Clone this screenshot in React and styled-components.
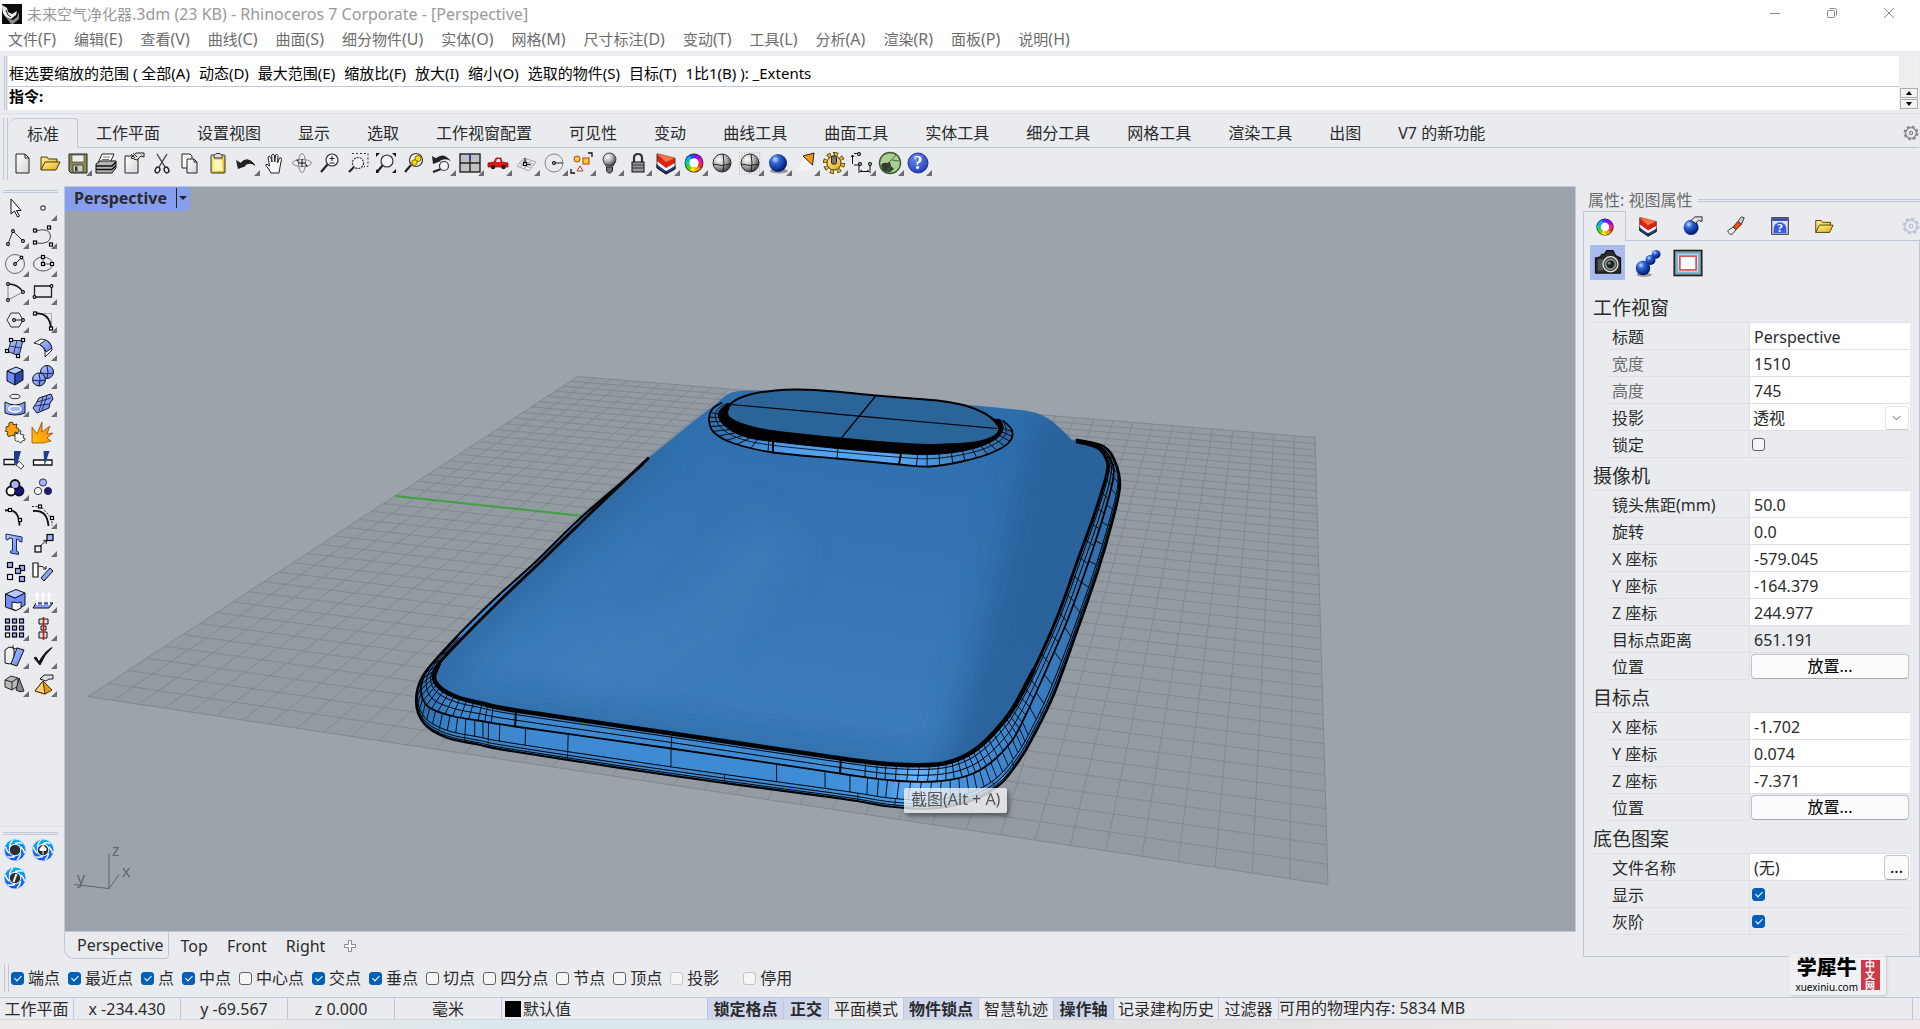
import React from 'react';
import styled, { createGlobalStyle, css } from 'styled-components';

const palette = {
  window: '#eaebef',
  line: '#c0c6dc',
  soft: '#dde0e8',
  text: '#2b2b2b',
  muted: '#6d6d6d',
  accent: '#005fb8',
  select: '#a9baec',
  viewport: '#9da3ab',
};

const GlobalStyle = createGlobalStyle`
  * {
    box-sizing: border-box;
  }
  body {
    margin: 0;
    background: ${palette.window};
    color: ${palette.text};
    font-family: 'Noto Sans', 'Noto Sans CJK SC', sans-serif;
    font-size: 16px;
    line-height: 20px;
  }
  button, input, select {
    font: inherit;
    color: inherit;
    margin: 0;
  }
  button {
    padding: 0;
    border: none;
    background: none;
  }
`;

/* ---------- layout ---------- */

const Window = styled.div`
  display: flex;
  flex-direction: column;
  min-height: 100vh;
`;

const TitleBar = styled.header`
  display: flex;
  align-items: center;
  height: 28px;
  padding: 0 3px 0 2px;
  background: #fff;
  color: #999;
`;

const Title = styled.h1`
  flex: 1;
  margin: 0 0 0 5px;
  font-size: 15px;
  font-weight: 400;
  span {
    font-size: 16px;
  }
`;

const WindowButton = styled.button`
  width: 57px;
  height: 26px;
  margin-bottom: 2px;
  svg {
    display: block;
    margin: 0 auto;
  }
`;

const MenuBar = styled.nav`
  display: flex;
  gap: 18px;
  height: 23px;
  padding: 0 8px 2px;
  background: #fff;
`;

const MenuItem = styled.button`
  font-size: 15px;
  line-height: 20px;
  color: #6d6d6d;
  white-space: nowrap;
  span {
    font-size: 16px;
  }
`;

const grip = css`
  border-left: 1px solid ${palette.line};
  &::before {
    content: '';
    width: 1px;
    margin-left: 1px;
    background: ${palette.line};
  }
`;

const CommandArea = styled.section`
  display: flex;
  margin: 5px 1px 3px 4px;
  height: 54px;
  ${grip}
`;

const CommandLines = styled.div`
  flex: 1;
  display: flex;
  flex-direction: column;
  margin-left: 1px;
  background: #fff;
  font-size: 15px;
  color: #000;
`;

const History = styled.div`
  display: flex;
  gap: 9px;
  height: 31px;
  padding: 7px 1px 0;
  border-bottom: 1px solid ${palette.line};
  white-space: nowrap;
`;

const Prompt = styled.label`
  display: flex;
  height: 20px;
  padding-left: 1px;
  font-weight: 700;
  line-height: 19px;
  input {
    flex: 1;
    border: none;
    outline: none;
    background: none;
    font-weight: 400;
  }
`;

const CommandScroll = styled.div`
  width: 20px;
  display: flex;
  flex-direction: column;
  gap: 1px;
  padding: 32px 1px 0;
  background: #eee;
`;

const ScrollButton = styled.button`
  height: 10px;
  border: 1px solid #adadad;
  background: #f2f2f2;
  svg {
    display: block;
    margin: 0 auto;
  }
`;

const ToolArea = styled.section`
  display: flex;
  height: 73px;
  border-top: 1px solid ${palette.soft};
  padding: 4px 1px 0 3px;
  &::before {
    content: '';
    width: 3px;
    height: 62px;
    border: solid ${palette.line};
    border-width: 0 1px;
  }
`;

const ToolMain = styled.div`
  flex: 1;
  min-width: 0;
`;

const TabStrip = styled.div`
  display: flex;
  height: 30px;
  padding-left: 1px;
`;

const ToolTab = styled.button`
  height: 30px;
  padding: ${({ $active }) => ($active ? '1px 18px 0' : '1px 19px 0 18px')};
  border-bottom: 1px solid ${({ $active }) => ($active ? 'transparent' : palette.line)};
  white-space: nowrap;
  ${({ $active }) =>
    $active &&
    css`
      border-top: 1px solid ${palette.line};
      border-right: 1px solid ${palette.line};
      border-radius: 8px 4px 0 0;
    `}
`;

const StripFill = styled.div`
  flex: 1;
  display: flex;
  justify-content: flex-end;
  align-items: center;
  border-bottom: 1px solid ${palette.line};
`;

const IconRow = styled.div`
  display: flex;
  padding-top: 1px;
`;

const ToolButton = styled.button`
  position: relative;
  width: 28px;
  height: 28px;
  svg {
    display: block;
    margin: 0 auto;
  }
  ${({ $more }) =>
    $more &&
    css`
      &::after {
        content: '';
        position: absolute;
        right: 0;
        bottom: 1px;
        border-left: 6px solid transparent;
        border-bottom: 6px solid #6c6d70;
      }
    `}
`;

const Workspace = styled.main`
  flex: 1;
  display: flex;
`;

const SideBar = styled.aside`
  width: 64px;
  display: flex;
  flex-direction: column;
  padding-top: 4px;
`;

const Rule = styled.div`
  height: 3px;
  margin: 0 6px 0 3px;
  border: solid ${palette.line};
  border-width: 1px 0;
`;

const SideGrid = styled.div`
  display: grid;
  grid-template-columns: 28px 28px;
  padding: 1px 0 0 1px;
`;

const PluginTools = styled.div`
  margin-top: auto;
  height: 134px;
  border-top: 1px solid ${palette.soft};
  padding-top: 5px;
`;

const Center = styled.div`
  flex: 1;
  min-width: 0;
  display: flex;
  flex-direction: column;
`;

const Viewport = styled.section`
  position: relative;
  flex: 1;
  min-height: 740px;
  overflow: hidden;
  border: 1px solid ${palette.line};
  background: ${palette.viewport};
  > svg {
    position: absolute;
    inset: 0;
    width: 100%;
    height: 100%;
  }
`;

const ViewTitle = styled.button`
  position: absolute;
  left: 0;
  top: 0;
  display: flex;
  align-items: center;
  height: 24px;
  padding: 0 0 2px 9px;
  border-radius: 0 0 5px 0;
  background: #879eed;
  font-weight: 700;
  span {
    padding-right: 9px;
  }
  i {
    width: 14px;
    height: 20px;
    border-left: 1px solid #222;
  }
  i::after {
    content: '';
    display: block;
    margin: 8px 0 0 2px;
    width: 0;
    border: 4px solid transparent;
    border-top-color: #222;
  }
`;

const Tooltip = styled.div`
  position: absolute;
  left: 839px;
  top: 601px;
  height: 25px;
  padding: 1px 7px;
  border-radius: 2px;
  background: rgba(242, 243, 245, 0.78);
  box-shadow: 2px 3px 4px rgba(0, 0, 0, 0.4);
  color: #555;
  white-space: nowrap;
`;

const ViewTabs = styled.div`
  display: flex;
  align-items: center;
  height: 28px;
  gap: 19px;
`;

const ViewTab = styled.button`
  height: 27px;
  ${({ $active }) =>
    $active &&
    css`
      align-self: flex-start;
      padding: 0 4px 0 12px;
      border: solid ${palette.line};
      border-width: 0 1px 1px;
      border-radius: 0 0 4px 10px;
      margin-right: -7px;
    `}
`;

/* ---------- properties panel ---------- */

const Panel = styled.aside`
  width: 344px;
  display: flex;
  flex-direction: column;
  padding-left: 7px;
`;

const PanelTitle = styled.div`
  display: flex;
  align-items: center;
  gap: 6px;
  height: 25px;
  padding: 3px 0 0 5px;
  color: ${palette.muted};
  ${Rule} {
    flex: 1;
    margin: 0;
  }
`;

const PanelTabs = styled.div`
  display: flex;
  height: 30px;
`;

const PanelTab = styled.button`
  width: ${({ $active }) => ($active ? '43px' : '44px')};
  border: solid ${palette.line};
  border-width: ${({ $active }) => ($active ? '1px 1px 0' : '0 0 1px')};
  svg {
    display: block;
    margin: 0 auto;
  }
`;

const PanelBody = styled.div`
  height: 716px;
  padding: 4px 9px 0;
  border: solid ${palette.line};
  border-width: 0 1px 1px;
`;

const PageButtons = styled.div`
  display: flex;
  gap: 5px;
  margin-left: -3px;
  height: 45px;
`;

const PageButton = styled.button`
  width: 35px;
  height: 35px;
  background: ${({ $active }) => ($active ? palette.select : 'none')};
  svg {
    display: block;
    margin: 0 auto;
  }
`;

const SectionTitle = styled.h2`
  margin: 0;
  height: 33px;
  padding-top: 4px;
  border-bottom: 1px solid ${palette.soft};
  font-size: 19px;
  line-height: 28px;
  font-weight: 400;
`;

const Property = styled.div`
  display: grid;
  grid-template-columns: 141px 1fr;
  height: 27px;
  margin-left: 15px;
  > label {
    padding: 4px 0 0 4px;
    border-bottom: 1px solid ${palette.soft};
    color: ${({ $muted }) => ($muted ? palette.muted : palette.text)};
  }
`;

const PropertyValue = styled.div`
  display: flex;
  align-items: center;
  min-width: 0;
  border: solid ${palette.soft};
  border-width: 0 0 1px 1px;
  background: ${({ $plain }) => ($plain ? 'none' : '#fff')};
  ${({ $action }) => $action && 'border-bottom-color: transparent;'}
`;

const TextField = styled.input`
  width: 100%;
  min-width: 0;
  padding: 1px 4px 0;
  border: none;
  outline: none;
  background: none;
`;

const Picker = styled.div`
  position: relative;
  display: flex;
  width: 100%;
  select {
    width: 100%;
    padding: 1px 3px 0;
    border: none;
    appearance: none;
    background: none;
  }
  svg {
    position: absolute;
    right: 1px;
    top: -1px;
    border: 1px solid #e6e6e6;
    border-bottom-color: #ccc;
    border-radius: 3px;
    pointer-events: none;
  }
`;

const PushButton = styled.button`
  flex: ${({ $small }) => ($small ? '0 0 25px' : '1')};
  height: 25px;
  margin: 0 1px;
  border: 1px solid #c4c4c8;
  border-bottom-color: #a8a8ac;
  border-radius: 4px;
  background: #fbfbfb;
  color: #000;
`;

const Tick = styled.input.attrs({ type: 'checkbox' })`
  appearance: none;
  flex: none;
  width: 13px;
  height: 13px;
  border: 1px solid ${({ disabled }) => (disabled ? '#c4c4c4' : '#5f6063')};
  border-radius: 3px;
  background: #f5f5f5;
  &:checked {
    border-color: ${palette.accent};
    background: ${palette.accent};
  }
  &:checked::after {
    content: '';
    display: block;
    width: 3px;
    height: 6px;
    margin: 1px 0 0 4px;
    border: solid #fff;
    border-width: 0 1px 1px 0;
    transform: rotate(45deg);
  }
  ${PropertyValue} & {
    margin-left: 2px;
  }
`;

/* ---------- bottom bars ---------- */

const SnapBar = styled.footer`
  position: relative;
  display: flex;
  height: 38px;
  padding: 4px 0 5px 4px;
  border-bottom: 1px solid ${palette.line};
  &::before {
    content: '';
    width: 3px;
    border: solid ${palette.line};
    border-width: 0 1px;
  }
`;

const SnapList = styled.div`
  display: flex;
  gap: 8px;
  align-items: center;
  padding-left: 2px;
`;

const Snap = styled.label`
  display: flex;
  align-items: center;
  gap: 4px;
  margin-left: ${({ $apart }) => ($apart ? '16px' : '0')};
  white-space: nowrap;
`;

const StatusBar = styled.footer`
  display: flex;
  height: 22px;
  border-bottom: 1px solid #d3d6dc;
`;

const StatusCell = styled.button`
  flex: none;
  display: flex;
  align-items: center;
  justify-content: ${({ $start }) => ($start ? 'flex-start' : 'center')};
  gap: 2px;
  width: ${({ $w }) => $w}px;
  padding-left: ${({ $start }) => ($start ? '3px' : '0')};
  border-right: 1px solid ${palette.line};
  white-space: nowrap;
  font-weight: ${({ $on }) => ($on ? 700 : 400)};
  background: ${({ $on }) => ($on ? '#ced6ec' : 'none')};
`;

const Swatch = styled.span`
  width: 16px;
  height: 16px;
  background: #000;
`;

const Memory = styled.output`
  flex: 1;
  margin-right: 7px;
  border-right: 1px solid ${palette.line};
`;

const Taskbar = styled.div`
  height: 9px;
  background: linear-gradient(90deg, #f0e9ea 0, #eee9eb 200px, #dbe7ec 480px, #dbe7ec 800px, #e2e1e1 1200px, #f0e8ea 1600px);
`;

const Watermark = styled.a`
  position: absolute;
  right: 34px;
  bottom: 2px;
  display: flex;
  align-items: center;
  gap: 3px;
  height: 41px;
  padding: 0 6px;
  border-radius: 4px;
  background: rgba(240, 241, 244, 0.8);
  box-shadow: 1px 1px 3px rgba(0, 0, 0, 0.15);
  color: #000;
  text-decoration: none;
  em {
    width: 19px;
    padding: 0 4px;
    background: #cf3a4a;
    color: #fff;
    font-size: 10px;
    line-height: 10px;
    font-style: normal;
    font-weight: 700;
    word-break: break-all;
  }
`;

const WatermarkName = styled.span`
  display: flex;
  flex-direction: column;
  align-items: center;
  font-size: 10px;
  line-height: 14px;
  strong {
    font-size: 20px;
    line-height: 25px;
    font-weight: 900;
  }
`;

/* ---------- icons ---------- */

const Defs = () => (
  <svg width="0" height="0" style={{ position: 'absolute' }} aria-hidden="true">
    <defs>
      <linearGradient id="blue" x1="0" y1="0" x2="1" y2="1">
        <stop offset="0" stopColor="#b9c8ff" />
        <stop offset="1" stopColor="#5b7cf2" />
      </linearGradient>
      <linearGradient id="gold" x1="0" y1="0" x2="1" y2="1">
        <stop offset="0" stopColor="#fff3a0" />
        <stop offset="1" stopColor="#e3a80e" />
      </linearGradient>
      <linearGradient id="fire" x1="0" y1="1" x2="1" y2="0">
        <stop offset="0" stopColor="#ffc400" />
        <stop offset="1" stopColor="#f97a14" />
      </linearGradient>
      <linearGradient id="paper" x1="0" y1="0" x2="1" y2="1">
        <stop offset="0" stopColor="#fff" />
        <stop offset="1" stopColor="#d4d4d6" />
      </linearGradient>
      <radialGradient id="ball" cx=".35" cy=".3" r=".7">
        <stop offset="0" stopColor="#c3dcff" />
        <stop offset=".35" stopColor="#2d63d8" />
        <stop offset="1" stopColor="#031a66" />
      </radialGradient>
      <radialGradient id="greyball" cx=".35" cy=".3" r=".75">
        <stop offset="0" stopColor="#fff" />
        <stop offset=".5" stopColor="#b5b5b5" />
        <stop offset="1" stopColor="#333" />
      </radialGradient>
      <radialGradient id="help" cx=".4" cy=".3" r=".8">
        <stop offset="0" stopColor="#6d8cf0" />
        <stop offset="1" stopColor="#1b35b4" />
      </radialGradient>
      <linearGradient id="lens" x1="0" y1="0" x2="0" y2="1">
        <stop offset="0" stopColor="#07b3ff" />
        <stop offset="1" stopColor="#0a52ff" />
      </linearGradient>
    </defs>
  </svg>
);

const Sq = ({ at, s = 3, fill = '#fff' }) =>
  at.map(([x, y]) => (
    <rect key={`${x}-${y}`} x={x - s / 2} y={y - s / 2} width={s} height={s} fill={fill} stroke="#000" strokeWidth="1.2" />
  ));

const Dots = ({ at, r = 1.4 }) =>
  at.map(([x, y]) => <circle key={`${x}-${y}`} cx={x} cy={y} r={r} fill="#fff" stroke="#000" strokeWidth="1.1" />);

const wheel = ['#ff2a2a', '#ff9d00', '#ffe600', '#4be000', '#00d6a4', '#00b4ff', '#2a45ff', '#a800ff', '#ff00b8'];

const ColorWheel = () => (
  <>
    <circle cx="12" cy="12" r="9.4" fill="#111" />
    {wheel.map((color, i) => (
      <circle
        key={color}
        cx="12"
        cy="12"
        r="6.700"
        fill="none"
        stroke={color}
        strokeWidth="4"
        pathLength="90"
        strokeDasharray="10.4 79.6"
        strokeDashoffset={-i * 10}
      />
    ))}
    <circle cx="12" cy="12" r="4.800" fill="#fff" />
  </>
);

const Layers = () => (
  <>
    <path d="M3 13l9 6.500V23l-9-6zM12 19.500l9-5V18l-9 5z" fill="#20409a" stroke="#111" />
    <path d="M3 10l9 6.500v3.500L3 13.500zM12 16.500l9-5v3.500l-9 5z" fill="#fff" />
    <path d="M3 3l9 8v6l-9-7zM12 11l9-4v5l-9 5z" fill="#dd2412" />
    <path d="M3 2.500L21 7l-9 4.500z" fill="#ff7440" stroke="#a31" strokeWidth=".6" />
    <path d="M3 3v14l9 6 9-5V7" stroke="#222" strokeWidth=".8" />
  </>
);

const Folder = () => (
  <>
    <path d="M3 19V6h6l1.500 2H19v3" fill="url(#gold)" stroke="#4b3a00" />
    <path d="M3 19l4-8h15l-4 8z" fill="url(#gold)" stroke="#4b3a00" />
  </>
);

const Lens = ({ x = 14, y = 9, r = 6, children, dash }) => (
  <>
    <path d={`M${x - r + 1.5} ${y + r - 1.5}L3 21`} stroke="#222" strokeWidth="2.2" />
    <circle cx={x} cy={y} r={r} fill="#f2f3f5" stroke="#333" strokeWidth="1.2" strokeDasharray={dash} />
    {children}
  </>
);

const Aperture = ({ children }) => (
  <>
    <circle cx="12" cy="12" r="11.5" fill="#dfe1e8" />
    <circle cx="12" cy="12" r="10.5" fill="url(#lens)" />
    {[0, 60, 120, 180, 240, 300].map((a) => (
      <path key={a} d="M12 5.500Q17 4 19.500 5.500" fill="none" stroke="#fff" strokeWidth="1.4" transform={`rotate(${a} 12 12)`} />
    ))}
    <circle cx="12" cy="12" r="6.200" fill="#fff" />
    <circle cx="12" cy="12" r="5.300" fill="#2e2e30" />
    {children}
  </>
);

const icons = {
  new: <path d="M6 3h9l4 4v15H6zM15 3v4h4" fill="url(#paper)" stroke="#222" />,
  open: <Folder />,
  save: (
    <>
      <path d="M3 3h18v19H5l-2-2z" fill="#8d8a4e" stroke="#222" />
      <path d="M6 4h12v7H6z" fill="#eee" stroke="#444" strokeWidth=".7" />
      <path d="M7 14h10v7H7z" fill="#ccc" stroke="#333" strokeWidth=".8" />
      <path d="M9 15.500h2.500V20H9z" fill="#333" />
    </>
  ),
  print: (
    <>
      <path d="M8 3h12l-4 9H4z" fill="#fff" stroke="#222" />
      <path d="M9 6h7M8 8.500h7" stroke="#777" />
      <path d="M2 13l4-3h16v7l-4 5H2z" fill="#b5b5b7" stroke="#111" />
      <path d="M2 15h16l4-4M2 18.500h16l4-4" stroke="#111" strokeWidth="1.5" fill="none" />
    </>
  ),
  notes: (
    <>
      <path d="M3 5h13v17H3z" fill="url(#paper)" stroke="#222" />
      <path d="M9 7l5-5h8v4l-3-1-4 4-3-1z" fill="#ddd" stroke="#222" />
      <path d="M9 3l4 4M11 2l4 4" stroke="#333" />
    </>
  ),
  cut: (
    <>
      <path d="M7 3l8 13M17 3L9 16" stroke="#444" strokeWidth="1.4" />
      <ellipse cx="7.500" cy="19" rx="2.200" ry="3" fill="none" stroke="#222" strokeWidth="1.4" transform="rotate(25 7.500 19)" />
      <ellipse cx="16.500" cy="19" rx="2.200" ry="3" fill="none" stroke="#222" strokeWidth="1.4" transform="rotate(-25 16.500 19)" />
    </>
  ),
  copy: (
    <>
      <path d="M4 3h8l2 2v12H4z" fill="#fff" stroke="#222" />
      <path d="M9 8h7l3 3v11H9zM16 8v3h3" fill="url(#paper)" stroke="#222" />
    </>
  ),
  paste: (
    <>
      <rect x="5" y="4" width="14" height="18" rx="1" fill="url(#gold)" stroke="#333" />
      <path d="M8 7V4.500l2-2h4l2 2V7z" fill="#ddd" stroke="#333" />
      <path d="M8 9h8l1 11H7z" fill="#fdf7b4" />
    </>
  ),
  undo: (
    <>
      <path d="M6 13q7-9 15 1-6-4-11 1z" fill="#222" stroke="#222" />
      <path d="M2 9l2 9 8-3z" fill="#222" />
    </>
  ),
  hand: (
    <path
      d="M9 22q-2-4-5.500-8 1-2 4 1L6 6q1.500-2 3 1l1 4-.3-7q1.500-2 2.600 0l.5 7 .8-7q1.800-1.500 2.400.5L15.500 12l2-5q2-1 2 1.500L18 16l-1 6z"
      fill="#fafafa"
      stroke="#222"
    />
  ),
  rotate: (
    <g fill="none" stroke="#888">
      <ellipse cx="12" cy="12" rx="9.500" ry="3.500" />
      <ellipse cx="12" cy="12" rx="3.500" ry="9.500" />
      <path d="M12 8v8M8 12h8" stroke="#111" />
      <path d="M6 9l3-1-1 3zM18 15l-3 1 1-3z" fill="#111" />
    </g>
  ),
  zoom: (
    <Lens>
      <path d="M11.500 7.500h5M14 5v5M11.500 12h5" stroke="#222" />
    </Lens>
  ),
  zoomWindow: (
    <>
      <path d="M6 2.500h16v13h-4" fill="none" stroke="#333" strokeDasharray="2 2" />
      <Lens x={12} y={12} r={5.5} dash="2 1" />
    </>
  ),
  zoomExtents: (
    <>
      <Lens x={13} y={10} r={6} />
      <path d="M2 6V2h4zM22 6V2h-4zM22 18v4h-4zM2 18v4h3z" fill="#111" />
    </>
  ),
  zoomSelected: (
    <Lens r={6.5}>
      <circle cx="16" cy="7.500" r="3" fill="#ffe000" stroke="#7a6a00" />
      <rect x="10" y="9" width="5" height="5" rx="1.500" fill="#ffe000" stroke="#7a6a00" />
    </Lens>
  ),
  undoView: (
    <>
      <Lens x={14} y={15} r={4.5} />
      <path d="M5 8q8-8 16 2-7-4-13 1z" fill="#222" />
      <path d="M2 5l1 8 8-3z" fill="#222" />
    </>
  ),
  fourView: (
    <>
      <rect x="2" y="3" width="20" height="18" fill="#bfc0c2" stroke="#222" strokeWidth="1.4" />
      <path d="M12 3v18M2 12h20" stroke="#222" strokeWidth="1.4" />
      <path d="M12 3v5" stroke="#2038d0" strokeWidth="1.6" />
    </>
  ),
  car: (
    <>
      <path d="M2 12l6-1 2-4h5l1 4 6 1v4H2z" fill="#e81515" stroke="#8b0000" strokeWidth=".7" />
      <path d="M11 8h3l.5 3H10z" fill="#e8eef5" />
      <circle cx="7" cy="16" r="2.300" fill="#222" />
      <circle cx="17.500" cy="16" r="2.300" fill="#222" />
    </>
  ),
  cplane: (
    <>
      <path d="M3 15l7-8 12 4-7 9zM6 16.500l7.500-8.500M10 18l7-8.500M5 12l12 5M8 9.500l12 4" fill="none" stroke="#aaa" />
      <path d="M11 13V7M11 13l6 1" stroke="#222" strokeWidth="1.2" />
      <Sq at={[[11, 13]]} />
    </>
  ),
  circleTool: (
    <>
      <circle cx="12" cy="12" r="9" fill="none" stroke="#888" />
      <path d="M12 12h9" stroke="#222" />
      <Dots at={[[12, 12]]} />
    </>
  ),
  select: (
    <>
      <path d="M18 2h4v4M1 18v4h4" fill="none" stroke="#111" strokeWidth="1.3" />
      <circle cx="7" cy="8" r="3" fill="#ffd21a" stroke="#b33" />
      <rect x="13" y="7" width="6" height="6" fill="#ffd21a" stroke="#b33" />
      <path d="M10 15l3 5H7z" fill="#fff" stroke="#b33" />
    </>
  ),
  bulb: (
    <>
      <path d="M8 15q-3-4-3-6.500a6.500 6.500 0 0113 0Q18 11 15 15z" fill="url(#greyball)" stroke="#444" />
      <path d="M8.500 16h6v4l-2 2h-2l-2-2z" fill="#777" stroke="#222" />
    </>
  ),
  lock: (
    <>
      <path d="M8 11V7q0-4 4-4t4 4v4" fill="none" stroke="#333" strokeWidth="2.2" />
      <rect x="6" y="11" width="12" height="10" fill="#999" stroke="#111" />
      <path d="M6 14h12M6 17h12" stroke="#333" />
    </>
  ),
  layers: <Layers />,
  colors: <ColorWheel />,
  shaded: (
    <>
      <circle cx="12" cy="12" r="9" fill="url(#greyball)" stroke="#333" />
      <path d="M3 13q9 3 18 0M13 3q2 9 0 18" fill="none" stroke="#222" />
    </>
  ),
  ghosted: (
    <>
      <path d="M1 2h23M1 5h23M1 8h23M1 11h23M1 14h23M1 17h23M1 20h23M1 23h23" stroke="#aaa" strokeDasharray="1 1.5" />
      <circle cx="12" cy="12" r="9" fill="url(#greyball)" stroke="#333" />
      <path d="M3 13q9 3 18 0M13 3q2 9 0 18" fill="none" stroke="#222" />
    </>
  ),
  render: (
    <>
      <ellipse cx="13" cy="20" rx="9" ry="2.500" fill="#999" />
      <circle cx="12" cy="12" r="9" fill="url(#ball)" />
    </>
  ),
  spotlight: (
    <>
      <path d="M12 4L3 19q7 2 14-2l5-12z" fill="#fff" opacity=".5" />
      <path d="M9 5l11-3-1.500 12z" fill="url(#fire)" stroke="#222" />
    </>
  ),
  gears: (
    <>
      <circle cx="12" cy="12" r="8" fill="none" stroke="#4b3a00" strokeWidth="6" pathLength="80" strokeDasharray="5.6 4.4" />
      <circle cx="12" cy="12" r="8" fill="none" stroke="#dfb63d" strokeWidth="4.4" pathLength="80" strokeDasharray="3.8 6.2" strokeDashoffset="-.9" />
      <circle cx="12" cy="12" r="7" fill="url(#gold)" stroke="#4b3a00" />
      <rect x="9.500" y="5" width="5" height="8" rx="1.500" fill="#777" stroke="#222" />
    </>
  ),
  dims: (
    <>
      <path d="M8 2.500H4M2.500 4v9M4 14h5M9 14v8M20 14v8M10 20.500h9M2.500 4l-1.500 2M2.500 4L4 6M10 20.500l2-1.500M19 20.500L17 19" fill="none" stroke="#111" />
      <Dots at={[[9, 3], [10, 13], [20, 13]]} />
    </>
  ),
  grasshopper: (
    <>
      <circle cx="12" cy="12" r="10.500" fill="#a9cf93" stroke="#3f5a38" strokeWidth="1.4" />
      <path d="M3 14q2-3 6-2l3-1 1 4 3 3-4 3q-5 1-8-3z" fill="#333d30" />
      <path d="M10 12q5-4 9-9M14 9l7 1M13 15L9 21" stroke="#4e6b45" fill="none" />
    </>
  ),
  help: (
    <>
      <circle cx="12" cy="12" r="10" fill="url(#help)" stroke="#20359d" />
      <text x="12" y="18" textAnchor="middle" fontSize="18" fontWeight="700" fill="#fff" fontFamily="Liberation Serif, serif">?</text>
    </>
  ),
  pointer: <path d="M8 3v15l3.500-3 3 6 2-1-3-5.500h4.500z" fill="#fff" stroke="#111" />,
  point: <circle cx="12" cy="12" r="2.200" fill="#fff" stroke="#444" strokeWidth="1.2" />,
  polyline: (
    <>
      <path d="M5 20L10 7l10 10" fill="none" stroke="#333" />
      <Dots at={[[5, 20], [10, 7], [20, 17]]} />
    </>
  ),
  curve: (
    <>
      <path d="M4 7Q19 3 19.500 12T4 19" fill="none" stroke="#444" />
      <Sq at={[[4, 6.5], [18, 3.5], [4, 18.5], [20, 20.5]]} />
    </>
  ),
  circle: (
    <>
      <circle cx="12" cy="12" r="9.500" fill="none" stroke="#666" />
      <path d="M12 12l6.500-6.500" stroke="#222" />
      <Dots at={[[12, 12], [18.5, 5.5]]} />
    </>
  ),
  ellipse: (
    <>
      <ellipse cx="12" cy="12" rx="9.500" ry="7" fill="none" stroke="#555" />
      <path d="M12 12V5M12 12h9" stroke="#555" />
      <Sq at={[[12, 5], [12, 12], [21, 12]]} />
    </>
  ),
  arc: (
    <>
      <path d="M5 4v16l15-8" fill="none" stroke="#888" />
      <path d="M5 4q10 0 15 8" fill="none" stroke="#111" strokeWidth="1.3" />
      <Dots at={[[5, 4], [5, 20], [20, 12]]} />
    </>
  ),
  rectangle: (
    <>
      <path d="M3.500 6h17v11h-17z" fill="none" stroke="#222" strokeWidth="1.3" />
      <Dots at={[[20.5, 6], [3.5, 17]]} />
    </>
  ),
  polygon: (
    <>
      <path d="M8 5h8l4 7-4 7H8l-4-7z" fill="none" stroke="#333" />
      <path d="M11 12h9" stroke="#222" />
      <Dots at={[[11, 12], [20, 12]]} />
    </>
  ),
  fillet: (
    <>
      <path d="M4 5.500h16.500V20" fill="none" stroke="#aaa" />
      <path d="M4 5.500q15-1 16 15" fill="none" stroke="#111" strokeWidth="1.8" />
      <Sq at={[[4, 5.5], [20, 20.5]]} />
    </>
  ),
  surface: (
    <>
      <path d="M8 4.500h12L16 20 5 15.500z" fill="url(#blue)" stroke="#223" />
      <path d="M14 4.500L10.500 18M6.500 10l12 2" stroke="#334" fill="none" />
      <Sq at={[[8, 4], [20, 4], [4, 15], [15, 20]]} />
    </>
  ),
  loft: (
    <>
      <path d="M3 7l7-4q11 1 11 11l-7 7q2-12-11-14z" fill="#fff" stroke="#222" />
      <path d="M8.500 8.500l6.500-4.500q5 3 6 8l-6 4q-1-5-6.500-7.500z" fill="url(#blue)" stroke="#223" />
    </>
  ),
  box: (
    <>
      <path d="M4 7l8 3v11l-8-4z" fill="#6f8cff" stroke="#111" />
      <path d="M12 10l8-4v10l-8 5z" fill="#2b49b4" stroke="#111" />
      <path d="M4 7l9-4 7 3-8 4z" fill="#b9c8ff" stroke="#111" />
    </>
  ),
  spheres: (
    <>
      <circle cx="16" cy="8" r="6.500" fill="url(#blue)" stroke="#111" />
      <circle cx="8" cy="15.500" r="6.500" fill="url(#blue)" stroke="#111" />
      <path d="M10 9q6 2 12 0M16 2q2 6 0 12M2 16q6 2 12 0M8 9q2 6 0 13" fill="none" stroke="#124" />
    </>
  ),
  cylinder: (
    <>
      <ellipse cx="12" cy="4.500" rx="5" ry="2.200" fill="none" stroke="#333" />
      <path d="M2 10q10 6 20 0v11q-10 4-20 0z" fill="url(#blue)" stroke="#111" />
      <ellipse cx="12" cy="17" rx="6" ry="3" fill="#a8b7f5" stroke="#fff" strokeWidth="1.6" />
    </>
  ),
  mesh: (
    <>
      <path d="M2 16Q6 10 8 6l12-4 2 5q-4 4-4 9l-12 5z" fill="url(#blue)" stroke="#111" />
      <path d="M6 10l14-4M4 14l14-2M12 5l-4 14M16 4l-5 14" fill="none" stroke="#113" strokeWidth=".8" />
    </>
  ),
  puzzle: (
    <>
      <path d="M3 7l3-1q-1-4 2-4t2 3l4-1-1 4q4 0 3 3t-4 1l-1 4-3-1q-1 3-3 1t0-4l-3-1q2-1 1-4z" fill="#f8a31a" stroke="#5a3a00" />
      <path d="M12 13l3 1q0-4 3-3l-1 3 4 1-1 3q3 0 2 2l-3 1-1 2-3-2q-2 1-3-1z" fill="#fff" stroke="#444" />
    </>
  ),
  explode: <path d="M1 23V7l5 7 5-12 0 10 8-6-3 8 6-1-6 5 4 3-8 2z" fill="url(#fire)" stroke="#8a3b00" strokeWidth=".7" />,
  trim: (
    <>
      <path d="M1 11.500h11v5H1z" fill="#fff" stroke="#111" strokeWidth="1.3" />
      <path d="M16 13l5 5-3 3-5-4z" fill="#fff" stroke="#444" />
      <path d="M11 3h7l-4 14-3-4z" fill="#1f3b92" />
    </>
  ),
  split: (
    <>
      <path d="M2.500 12h18.500v5H2.500z" fill="#fff" stroke="#111" strokeWidth="1.3" />
      <path d="M12.500 3h6l-5 15z" fill="#1f3b92" />
    </>
  ),
  group: (
    <g stroke="#111" strokeWidth="1.8">
      <circle cx="8" cy="15" r="4.500" fill="#fff" />
      <circle cx="16" cy="15" r="4.500" fill="#1d1685" />
      <circle cx="12" cy="8.500" r="4.500" fill="#aab0ff" />
      <circle cx="8.500" cy="14.800" r="3" fill="#fff" stroke="none" />
    </g>
  ),
  ungroup: (
    <g stroke="#333">
      <circle cx="12" cy="6.500" r="3.600" fill="#aab0ff" />
      <circle cx="7" cy="15" r="3.600" fill="#fff" />
      <circle cx="17" cy="15" r="3.600" fill="#1d1685" />
    </g>
  ),
  editPoints: (
    <>
      <path d="M2 6.500q14-3 14.500 15" fill="none" stroke="#111" strokeWidth="1.8" />
      <Sq at={[[7, 6], [17, 16]]} />
    </>
  ),
  controlPoints: (
    <>
      <path d="M1 2.500h9l11 12v7" fill="none" stroke="#222" strokeDasharray="2 1.5" />
      <path d="M2 7q14-2 15.500 15" fill="none" stroke="#111" strokeWidth="1.8" />
      <Sq at={[[9, 2.5], [21, 14]]} />
    </>
  ),
  text: <path d="M3 2l16 3v5l-2.500-.5-1-2-2-.5V19l2 1v2.500L7.500 21v-2l2-.5V6.500L6 6 5 8 3 7.500z" fill="url(#blue)" stroke="#1b2a66" />,
  move: (
    <>
      <path d="M8 15l8-7M16 8l-1 4M16 8l-4 1" stroke="#222" />
      <Sq at={[[7, 17]]} s={6} fill="#eee" />
      <Sq at={[[19, 5.5]]} s={6} fill="#9db2ff" />
    </>
  ),
  copyObjects: (
    <>
      <Sq at={[[7, 5], [19, 8], [15, 11], [19, 19]]} s={5} fill="#9db2ff" />
      <Sq at={[[7, 17]]} s={5} fill="#eee" />
    </>
  ),
  rotateObjects: (
    <>
      <path d="M2 3h5v14H2z" fill="#fff" stroke="#111" strokeWidth="1.2" />
      <path d="M7 6q6 0 8 3M15 9l-3 0M15 9V6" fill="none" stroke="#222" />
      <path d="M10 18L19 8l3 3-9 10z" fill="url(#blue)" stroke="#111" />
    </>
  ),
  boolean: (
    <>
      <path d="M2.500 6L12 10l10-5v12l-10 5.500L2.500 19z" fill="#6f8cff" stroke="#111" />
      <path d="M2.500 6L13 1.500 22 5l-10 5z" fill="#b9c8ff" stroke="#111" />
      <path d="M9 14l6 1 3-1v6l-5 2.500-4-1.500z" fill="#fff" stroke="#111" />
    </>
  ),
  extrude: (
    <>
      <path d="M5 15h17l-4 5H2z" fill="#7e9aff" stroke="#111" />
      <path d="M6 17V7M12 17V7M18 17V7" stroke="#fff" strokeWidth="2" />
      <path d="M3.500 8L6 4l2.500 4zM9.500 8L12 4l2.500 4zM15.500 8L18 4l2.500 4z" fill="#fff" />
    </>
  ),
  array: (
    <>
      <Sq at={[[4.5, 5], [11.5, 5], [18.5, 5], [4.5, 12], [11.5, 12], [18.5, 12], [11.5, 19], [18.5, 19]]} s={4} fill="#9db2ff" />
      <Sq at={[[4.5, 19]]} s={4} />
    </>
  ),
  align: (
    <>
      <path d="M8 3h9v5H8zM10 10h5v4h-5zM8 16h8v6H8z" fill="#ddd" stroke="#111" />
      <path d="M12.500 1v23" stroke="#c81616" strokeWidth="1.6" />
    </>
  ),
  shear: (
    <>
      <path d="M2 6l4-3 5 1v13l-4 3-5-1z" fill="#eee" stroke="#111" />
      <path d="M14 4l7 2-7 16-6-2z" fill="url(#blue)" stroke="#111" />
      <path d="M10 1v4l5-1" fill="none" stroke="#333" />
    </>
  ),
  check: <path d="M3 14l2-1 3 5Q13 8 21 3.500 13 11 9 21z" fill="#111" stroke="#111" />,
  solids: (
    <>
      <path d="M2 8l6-4 7 2v8l-6 4-7-3z" fill="#bbb" stroke="#222" />
      <path d="M2 8l7 2v8M9 10l6-4" fill="none" stroke="#222" />
      <path d="M16 6l5 13q-4 2-8-1z" fill="#888" stroke="#222" />
    </>
  ),
  pyramid: (
    <>
      <path d="M12 9l9 9-7 4-10-3z" fill="#e39a1b" stroke="#4a2f00" />
      <path d="M12 9L4 19l10 3z" fill="#ffd36e" stroke="#4a2f00" />
      <path d="M9 7l4-4h9v4h-4l-3 2z" fill="#ddd" stroke="#222" />
    </>
  ),
  lensA: <Aperture />,
  lensB: (
    <Aperture>
      <path d="M12 7.500v9M9 10.500l3-3 3 3v2H9z" fill="#fff" stroke="#fff" />
    </Aperture>
  ),
  lensC: (
    <Aperture>
      <path d="M13.500 8l-3 8" stroke="#fff" strokeWidth="2" />
    </Aperture>
  ),
  material: (
    <>
      <circle cx="11" cy="13.500" r="8.200" fill="url(#ball)" />
      <path d="M11 6l4-4h8v5l-4-1-3 3z" fill="#ddd" stroke="#222" />
    </>
  ),
  brush: (
    <>
      <path d="M3 17l6-4 3 3-4 5q-4 1-5-4z" fill="#eee" stroke="#333" />
      <path d="M9 13l5-6 4 3-6 6z" fill="#e6501c" stroke="#5a1b00" />
      <path d="M14 7l4-5 3 1-3 7z" fill="#ccc" stroke="#333" />
    </>
  ),
  helpPanel: (
    <>
      <rect x="3" y="3" width="18" height="18" fill="#dfe3fa" stroke="#111" />
      <path d="M3.500 3.500h17v3h-17z" fill="#3a45a8" />
      <path d="M5 20v-5a7 7 0 0114 0v5z" fill="#3a5be0" />
      <text x="12" y="19" textAnchor="middle" fontSize="13" fontWeight="700" fill="#fff" fontFamily="Liberation Serif, serif">?</text>
    </>
  ),
  camera: (
    <>
      <path d="M2 8l4-1 1-2h2l2-3h5l2 4 4 2v12H2z" fill="#2b2c2e" stroke="#111" />
      <path d="M4 9h4v9H4z" fill="#55575a" />
      <circle cx="14" cy="13" r="6" fill="#4c4e50" stroke="#e8e8e8" />
      <circle cx="14" cy="13" r="3.800" fill="#12241f" stroke="#aaa" />
      <circle cx="13" cy="12" r="1.300" fill="#5c8f7c" />
    </>
  ),
  chain: (
    <>
      <ellipse cx="9" cy="21.500" rx="6" ry="1.500" fill="#999" />
      <circle cx="18.500" cy="5" r="3.500" fill="url(#ball)" />
      <circle cx="14" cy="9.500" r="4" fill="url(#ball)" />
      <circle cx="8" cy="16" r="5.800" fill="url(#ball)" />
    </>
  ),
  frame: (
    <>
      <rect x="1" y="2" width="22" height="20" fill="#8e9092" stroke="#222" strokeWidth="1.3" />
      <rect x="3.500" y="4.500" width="17" height="15" fill="#eee" stroke="#68c4ea" strokeWidth="1.5" />
      <rect x="5.500" y="6.500" width="13" height="11" fill="#fff" stroke="#e04848" strokeWidth="1.3" />
    </>
  ),
};

const Icon = ({ name, size = 24 }) => (
  <svg width={size} height={size} viewBox="0 0 24 24" aria-hidden="true">
    <g fill="none">{icons[name]}</g>
  </svg>
);

const Gear = ({ size = 16, color = '#888' }) => (
  <svg width={size} height={size} viewBox="0 0 20 20" fill="none" stroke={color} aria-hidden="true">
    <circle cx="10" cy="10" r="8" strokeWidth="2.6" strokeDasharray="3.6 2.68" />
    <circle cx="10" cy="10" r="6.600" strokeWidth="1.5" />
    <circle cx="10" cy="10" r="2" strokeWidth="1.5" />
  </svg>
);

const Logo = () => (
  <svg width="20" height="20" viewBox="0 0 20 20" aria-hidden="true">
    <rect width="20" height="20" fill="#0c0c0c" />
    <path d="M0 1l5 3 1 4 4 2 5-3-1 4-5 4q-6-1-8-6-1-4-1-8z" fill="#ededed" />
    <path d="M3 12l4 3 4 1 4-3 2-5v7l-6 5H9z" fill="#8a8a8a" />
    <path d="M4 6l2 5 3 2" stroke="#222" fill="none" />
  </svg>
);

/* ---------- 3D scene ---------- */

// perspective map of the unit square onto the construction plane
const plane = (u, v) => {
  const [[x0, y0], [x1, y1], [x2, y2], [x3, y3]] = [[578, 377], [1315, 438], [1328, 885], [88, 697]];
  const dx1 = x1 - x2;
  const dx2 = x3 - x2;
  const sx = x0 - x1 + x2 - x3;
  const dy1 = y1 - y2;
  const dy2 = y3 - y2;
  const sy = y0 - y1 + y2 - y3;
  const det = dx1 * dy2 - dx2 * dy1;
  const g = (sx * dy2 - dx2 * sy) / det;
  const h = (dx1 * sy - sx * dy1) / det;
  const w = g * u + h * v + 1;
  return [
    ((x1 - x0 + g * x1) * u + (x3 - x0 + h * x3) * v + x0) / w,
    ((y1 - y0 + g * y1) * u + (y3 - y0 + h * y3) * v + y0) / w,
  ];
};

const segment = (a, b) => `M${a.map((n) => n.toFixed(1))}L${b.map((n) => n.toFixed(1))}`;

const CELLS = 40;
const gridPath = Array.from({ length: CELLS + 1 }, (_, i) => {
  const t = i / CELLS;
  return segment(plane(t, 0), plane(t, 1)) + segment(plane(0, t), plane(1, t));
}).join('');

// smooth curve through every point
const smooth = (pts) =>
  pts.slice(1).reduce((d, p, i) => {
    const a = pts[Math.max(i - 1, 0)];
    const b = pts[i];
    const c = pts[Math.min(i + 2, pts.length - 1)];
    return `${d}C${b[0] + (p[0] - a[0]) / 6} ${b[1] + (p[1] - a[1]) / 6} ${p[0] - (c[0] - b[0]) / 6} ${p[1] - (c[1] - b[1]) / 6} ${p[0]} ${p[1]}`;
  }, `M${pts[0]}`);

const mix = (p, q, t) => [p[0] + (q[0] - p[0]) * t, p[1] + (q[1] - p[1]) * t];
const between = (a, b, t) => a.map((p, i) => mix(p, b[i], t));

const pointAt = (pts, s) => {
  const i = Math.min(Math.floor(s), pts.length - 2);
  const f = s - i;
  const p = [pts[Math.max(i - 1, 0)], pts[i], pts[i + 1], pts[Math.min(i + 2, pts.length - 1)]];
  return [0, 1].map(
    (k) =>
      0.5 *
      (2 * p[1][k] +
        (p[2][k] - p[0][k]) * f +
        (2 * p[0][k] - 5 * p[1][k] + 4 * p[2][k] - p[3][k]) * f * f +
        (3 * p[1][k] - p[0][k] - 3 * p[2][k] + p[3][k]) * f * f * f)
  );
};

const ribs = (a, b, at) => at.map((s) => segment(pointAt(a, s), pointAt(b, s))).join('');
const range = (from, to, step) =>
  Array.from({ length: Math.floor((to - from) / step) + 1 }, (_, i) => from + i * step);

const inner = [
  [649, 458], [587, 517], [543, 560], [501, 600], [464, 637], [439, 664], [434, 678], [441, 689], [458, 698],
  [482, 704], [516, 711], [672, 734], [841, 759], [894, 765], [937, 765], [962, 758], [982, 745], [1002, 724],
  [1015, 706], [1034, 670], [1059, 613], [1078, 560], [1095, 513], [1107, 473], [1106, 459], [1097, 448], [1076, 442],
];
const middle = [
  [646, 461], [584, 517], [539, 560], [496, 600], [457, 638], [428, 670], [421, 690], [428, 707], [450, 716],
  [478, 721], [515, 727], [671, 749], [840, 774], [893, 781], [935, 782], [968, 776], [991, 763], [1012, 741],
  [1025, 717], [1042, 680], [1067, 622], [1087, 567], [1103, 518], [1113, 480], [1112, 463], [1101, 448], [1076, 441],
];
const outer = [
  [643, 465], [581, 518], [536, 562], [494, 600], [453, 641], [423, 676], [416, 702], [424, 724], [446, 738],
  [478, 745], [514, 752], [671, 776], [840, 799], [890, 807], [932, 809], [972, 801], [1000, 785], [1020, 760],
  [1034, 736], [1054, 695], [1076, 635], [1098, 572], [1112, 524], [1120, 488], [1116, 464], [1104, 447], [1076, 440],
];
const lower = between(middle, outer, 0.68);

const capBand = [
  [727, 404], [719, 412], [720, 421], [731, 431], [748, 438], [773, 442], [838, 449], [901, 454], [930, 455],
  [960, 452], [983, 446], [999, 437], [1003, 428], [1000, 420],
];
const flange = [
  [722, 403], [712, 410], [709, 421], [714, 433], [734, 444], [773, 453], [837, 459], [899, 465], [930, 467],
  [962, 462], [990, 454], [1009, 443], [1012, 431], [1003, 421],
];
const capTop = [
  [727, 413], [732, 403], [750, 395], [775, 391], [799, 390], [835, 392], [875, 396], [937, 401], [965, 406],
  [985, 414], [996, 423], [999, 431], [992, 438], [975, 443], [945, 445], [913, 445], [840, 439], [768, 431],
  [740, 424], [729, 418], [727, 413],
];

const body = `${smooth(inner)}L1073 442Q1066 434 1059 428Q1046 414 1025 411L986 407L880 397L768 391H746C730 391 725 396 715 405Q690 424 671 440Z`;

const Scene = () => (
  <svg viewBox="65 187 1510 745" preserveAspectRatio="xMidYMid slice" role="img" aria-label="Perspective">
    <defs>
      <linearGradient id="side" x1="416" x2="1120" y1="0" y2="0" gradientUnits="userSpaceOnUse">
        <stop offset="0" stopColor="#2d6cac" />
        <stop offset=".06" stopColor="#3d87cf" />
        <stop offset=".55" stopColor="#3e8cd6" />
        <stop offset=".67" stopColor="#4796e0" />
        <stop offset=".71" stopColor="#6bb8ff" />
        <stop offset=".77" stopColor="#4592dc" />
        <stop offset=".86" stopColor="#3a80c6" />
        <stop offset="1" stopColor="#2f6ba3" />
      </linearGradient>
      <linearGradient id="skin" x1="740" y1="400" x2="680" y2="760" gradientUnits="userSpaceOnUse">
        <stop offset="0" stopColor="#2f6fad" />
        <stop offset=".5" stopColor="#3776b4" />
        <stop offset=".8" stopColor="#3b7cba" />
        <stop offset="1" stopColor="#3271af" />
      </linearGradient>
      <linearGradient id="rim" x1="710" x2="1012" y1="0" y2="0" gradientUnits="userSpaceOnUse">
        <stop offset="0" stopColor="#2e6ca8" />
        <stop offset=".25" stopColor="#4f9eec" />
        <stop offset=".6" stopColor="#58a8f6" />
        <stop offset="1" stopColor="#2c679e" />
      </linearGradient>
      <filter id="soft" x="-50%" y="-50%" width="200%" height="200%">
        <feGaussianBlur stdDeviation="16" />
      </filter>
      <clipPath id="bodyClip">
        <path d={body} />
      </clipPath>
    </defs>

    <path d={`M${plane(0, 0)}L${plane(1, 0)}L${plane(1, 1)}L${plane(0, 1)}Z`} fill="#929aa2" />
    <path d={gridPath} fill="none" stroke="#828890" strokeWidth="1" />
    <path d={segment(plane(0, 0.5), plane(0.3, 0.5))} stroke="#43a043" strokeWidth="2" />

    <path d={`${smooth(outer)}Z`} fill="url(#side)" />
    <path d={body} fill="url(#skin)" />
    <g clipPath="url(#bodyClip)">
      <g filter="url(#soft)" fill="none">
        <path d="M1045 400L1020 470L1000 560L980 640L950 740L930 800L1010 790L1140 480L1090 410Z" fill="#28619a" opacity=".9" />
        <path d="M660 440L560 545L470 640L425 690" stroke="#265f95" strokeWidth="26" opacity=".7" />
        <path d="M450 712L680 748L900 780" stroke="#2a68a3" strokeWidth="18" opacity=".7" />
        <path d="M780 530L690 640L560 670" stroke="#4485c3" strokeWidth="60" opacity=".3" />
      </g>
    </g>

    <g fill="none" stroke="#000">
      {[0.25, 0.6].map((t) => (
        <path key={t} d={smooth(between(inner, middle, t).slice(4))} />
      ))}
      {[0.68, 0.82, 0.92].map((t) => (
        <path key={t} d={smooth(between(middle, outer, t).slice(4))} />
      ))}
      <path d={smooth(inner)} strokeWidth="3" />
      <path d={smooth(inner.slice(5, 20))} strokeWidth="4.5" />
      <path d={smooth(middle.slice(4))} strokeWidth="1.8" />
      <path d={smooth(outer)} strokeWidth="2.2" />
      <path
        d={ribs(inner, middle, [...range(4.5, 9.6, 0.3), 11, ...range(12.3, 19, 0.25), ...range(19.3, 25, 0.35)])}
        strokeWidth=".9"
      />
      <path d={ribs(inner, middle, [10, 12])} strokeWidth="2" />
      <path
        d={ribs(middle, lower, [
          ...range(5, 9.9, 0.3), 10.1, 10.4, 11, 11.58, 11.88, 12.1, ...range(12.35, 18, 0.26), ...range(18.3, 25, 0.4),
        ])}
        strokeWidth=".9"
      />
      <path d={ribs(lower, outer, range(5, 25, 0.9))} strokeWidth=".7" />
    </g>

    <path d={`${smooth(flange)}Z`} fill="url(#rim)" />
    <g fill="none" stroke="#000">
      <path d={smooth(between(capBand, flange, 0.35))} strokeWidth=".8" />
      <path d={smooth(flange)} strokeWidth="1.8" />
      <path d={ribs(capBand, flange, [...range(1.3, 4.9, 0.4), 6, ...range(7.5, 12, 0.4)])} strokeWidth=".9" />
      <path d={ribs(capBand, flange, [5, 7])} strokeWidth="2" />
    </g>
    <path d={`${smooth(capBand)}Z`} fill="#000" stroke="#000" />
    <path d={smooth(capTop)} fill="#2a6499" stroke="#000" strokeWidth="2" />
    <path d="M731 405L997 429M876 396L841 439" stroke="#000" strokeWidth="1.2" />

    <g stroke="#606468" strokeWidth="1" fill="none">
      <path d="M74 885L109 889V854M109 889L119 875" />
    </g>
    <g fill="#63676b" fontSize="16">
      <text x="77" y="884">y</text>
      <text x="112" y="856">z</text>
      <text x="122" y="877">x</text>
    </g>
  </svg>
);

/* ---------- data ---------- */

const menus = [
  ['文件', 'F'], ['编辑', 'E'], ['查看', 'V'], ['曲线', 'C'], ['曲面', 'S'], ['细分物件', 'U'], ['实体', 'O'], ['网格', 'M'],
  ['尺寸标注', 'D'], ['变动', 'T'], ['工具', 'L'], ['分析', 'A'], ['渲染', 'R'], ['面板', 'P'], ['说明', 'H'],
];

const history = [
  '框选要缩放的范围 ( 全部(A)', '动态(D)', '最大范围(E)', '缩放比(F)', '放大(I)', '缩小(O)', '选取的物件(S)', '目标(T)',
  '1比1(B) ): _Extents',
];

const toolTabs = [
  '标准', '工作平面', '设置视图', '显示', '选取', '工作视窗配置', '可见性', '变动', '曲线工具', '曲面工具', '实体工具',
  '细分工具', '网格工具', '渲染工具', '出图', 'V7 的新功能',
];

// a trailing + marks a button with a flyout
const toolIcons = [
  'new', 'open', 'save+', 'print', 'notes', 'cut', 'copy', 'paste', 'undo+', 'hand', 'rotate', 'zoom', 'zoomWindow',
  'zoomExtents', 'zoomSelected', 'undoView+', 'fourView+', 'car+', 'cplane+', 'circleTool+', 'select+', 'bulb+', 'lock+',
  'layers+', 'colors+', 'shaded', 'ghosted+', 'render+', 'spotlight+', 'gears+', 'dims+', 'grasshopper+', 'help+',
];

const sideIcons = [
  'pointer', 'point+', 'polyline+', 'curve+', 'circle+', 'ellipse+', 'arc+', 'rectangle+', 'polygon+', 'fillet+',
  'surface+', 'loft+', 'box+', 'spheres+', 'cylinder+', 'mesh+', 'puzzle', 'explode', 'trim', 'split', 'group+', 'ungroup',
  'editPoints', 'controlPoints+', 'text', 'move+', 'copyObjects', 'rotateObjects', 'boolean+', 'extrude+', 'array+',
  'align+', 'shear+', 'check+', 'solids+', 'pyramid+',
];

const sections = [
  {
    title: '工作视窗',
    rows: [
      { label: '标题', value: 'Perspective' },
      { label: '宽度', value: '1510', muted: true },
      { label: '高度', value: '745', muted: true },
      { label: '投影', value: '透视', type: 'select' },
      { label: '锁定', type: 'check', value: false },
    ],
  },
  {
    title: '摄像机',
    rows: [
      { label: '镜头焦距(mm)', value: '50.0' },
      { label: '旋转', value: '0.0' },
      { label: 'X 座标', value: '-579.045' },
      { label: 'Y 座标', value: '-164.379' },
      { label: 'Z 座标', value: '244.977' },
      { label: '目标点距离', value: '651.191', type: 'readonly' },
      { label: '位置', value: '放置...', type: 'button' },
    ],
  },
  {
    title: '目标点',
    rows: [
      { label: 'X 座标', value: '-1.702' },
      { label: 'Y 座标', value: '0.074' },
      { label: 'Z 座标', value: '-7.371' },
      { label: '位置', value: '放置...', type: 'button' },
    ],
  },
  {
    title: '底色图案',
    rows: [
      { label: '文件名称', value: '(无)', type: 'file' },
      { label: '显示', type: 'check', value: true },
      { label: '灰阶', type: 'check', value: true },
    ],
  },
];

const snaps = [
  ['端点', true], ['最近点', true], ['点', true], ['中点', true], ['中心点', false], ['交点', true], ['垂点', true],
  ['切点', false], ['四分点', false], ['节点', false], ['顶点', false],
];

const modes = [
  ['锁定格点', 76, true], ['正交', 45, true], ['平面模式', 75], ['物件锁点', 75, true], ['智慧轨迹', 75],
  ['操作轴', 60, true], ['记录建构历史', 105], ['过滤器', 60],
];

/* ---------- components ---------- */

const Tool = ({ spec }) => {
  const name = spec.replace('+', '');
  return (
    <ToolButton aria-label={name} $more={spec.endsWith('+')}>
      <Icon name={name} />
    </ToolButton>
  );
};

const PropertyRow = ({ row, id }) => {
  const { label, value, type, muted } = row;
  const plain = type === 'check' || type === 'readonly' || type === 'button';
  return (
    <Property $muted={muted}>
      <label htmlFor={id}>{label}</label>
      <PropertyValue $plain={plain} $action={type === 'button'}>
        {!type && <TextField id={id} defaultValue={value} />}
        {type === 'readonly' && <TextField id={id} value={value} readOnly />}
        {type === 'check' && <Tick id={id} defaultChecked={value} />}
        {type === 'button' && <PushButton id={id}>{value}</PushButton>}
        {type === 'select' && (
          <Picker>
            <select id={id} defaultValue={value}>
              <option>{value}</option>
            </select>
            <svg width="24" height="24" viewBox="0 0 24 24" fill="none" stroke="#555" aria-hidden="true">
              <path d="M7.500 10l4 4 4-4" />
            </svg>
          </Picker>
        )}
        {type === 'file' && (
          <>
            <TextField id={id} defaultValue={value} />
            <PushButton $small>...</PushButton>
          </>
        )}
      </PropertyValue>
    </Property>
  );
};

const PropertiesPanel = () => (
  <Panel>
    <PanelTitle>
      属性: 视图属性
      <Rule />
    </PanelTitle>
    <PanelTabs>
      {['colors', 'layers', 'material', 'brush', 'helpPanel', 'open'].map((name, i) => (
        <PanelTab key={name} aria-label={name} $active={i === 0}>
          <Icon name={name} size={22} />
        </PanelTab>
      ))}
      <StripFill>
        <Gear size={18} color="#bcc4da" />
      </StripFill>
    </PanelTabs>
    <PanelBody>
      <PageButtons>
        {['camera', 'chain', 'frame'].map((name, i) => (
          <PageButton key={name} aria-label={name} $active={i === 0}>
            <Icon name={name} size={30} />
          </PageButton>
        ))}
      </PageButtons>
      {sections.map((section, s) => (
        <section key={section.title}>
          <SectionTitle>{section.title}</SectionTitle>
          {section.rows.map((row, r) => (
            <PropertyRow key={row.label} row={row} id={`prop-${s}-${r}`} />
          ))}
        </section>
      ))}
    </PanelBody>
  </Panel>
);

const App = () => {
  return (
    <Window>
      <GlobalStyle />
      <Defs />
      <TitleBar>
        <Logo />
        <Title>
          未来空气净化器<span>.3dm (23 KB) - Rhinoceros 7 Corporate - [Perspective]</span>
        </Title>
        <WindowButton aria-label="最小化">
          <svg width="12" height="12" viewBox="0 0 12 12" fill="none" stroke="#888">
            <path d="M1 6.500h10" />
          </svg>
        </WindowButton>
        <WindowButton aria-label="还原">
          <svg width="12" height="12" viewBox="0 0 12 12" fill="none" stroke="#888">
            <rect x="1.500" y="3.500" width="7" height="7" rx="1" />
            <path d="M3.500 1.500h5q2 0 2 2v5" />
          </svg>
        </WindowButton>
        <WindowButton aria-label="关闭">
          <svg width="12" height="12" viewBox="0 0 12 12" fill="none" stroke="#888">
            <path d="M1 1l10 10M11 1L1 11" />
          </svg>
        </WindowButton>
      </TitleBar>
      <MenuBar>
        {menus.map(([name, key]) => (
          <MenuItem key={key}>
            {name}
            <span>({key})</span>
          </MenuItem>
        ))}
      </MenuBar>

      <CommandArea>
        <CommandLines>
          <History>
            {history.map((part) => (
              <span key={part}>{part}</span>
            ))}
          </History>
          <Prompt>
            指令:
            <input />
          </Prompt>
        </CommandLines>
        <CommandScroll>
          <ScrollButton aria-label="上">
            <svg width="6" height="4" viewBox="0 0 6 4">
              <path d="M3 0l3 4H0z" />
            </svg>
          </ScrollButton>
          <ScrollButton aria-label="下">
            <svg width="6" height="4" viewBox="0 0 6 4">
              <path d="M3 4l3-4H0z" />
            </svg>
          </ScrollButton>
        </CommandScroll>
      </CommandArea>

      <ToolArea>
        <ToolMain>
          <TabStrip>
            {toolTabs.map((tab, i) => (
              <ToolTab key={tab} $active={i === 0}>
                {tab}
              </ToolTab>
            ))}
            <StripFill>
              <Gear />
            </StripFill>
          </TabStrip>
          <IconRow>
            {toolIcons.map((spec) => (
              <Tool key={spec} spec={spec} />
            ))}
          </IconRow>
        </ToolMain>
      </ToolArea>

      <Workspace>
        <SideBar>
          <Rule />
          <SideGrid>
            {sideIcons.map((spec) => (
              <Tool key={spec} spec={spec} />
            ))}
          </SideGrid>
          <PluginTools>
            <Rule />
            <SideGrid>
              {['lensA', 'lensB', 'lensC'].map((spec) => (
                <Tool key={spec} spec={spec} />
              ))}
            </SideGrid>
          </PluginTools>
        </SideBar>
        <Center>
          <Viewport>
            <Scene />
            <ViewTitle>
              <span>Perspective</span>
              <i />
            </ViewTitle>
            <Tooltip role="tooltip">截图(Alt + A)</Tooltip>
          </Viewport>
          <ViewTabs>
            <ViewTab $active>Perspective</ViewTab>
            <ViewTab>Top</ViewTab>
            <ViewTab>Front</ViewTab>
            <ViewTab>Right</ViewTab>
            <ViewTab aria-label="新增">
              <svg width="12" height="12" viewBox="0 0 12 12" fill="#fff" stroke="#888">
                <path d="M4.500.5h3v4h4v3h-4v4h-3v-4h-4v-3h4z" />
              </svg>
            </ViewTab>
          </ViewTabs>
        </Center>
        <PropertiesPanel />
      </Workspace>

      <SnapBar>
        <SnapList>
          {snaps.map(([name, on]) => (
            <Snap key={name}>
              <Tick defaultChecked={on} />
              {name}
            </Snap>
          ))}
          <Snap>
            <Tick disabled />
            投影
          </Snap>
          {/* 停用 is kept apart from the snap modes */}
          <Snap $apart>
            <Tick disabled />
            停用
          </Snap>
        </SnapList>
        <Watermark href="#xuexiniu">
          <WatermarkName>
            <strong>学犀牛</strong>
            <span>xuexiniu.com</span>
          </WatermarkName>
          <em>中文网</em>
        </Watermark>
      </SnapBar>
      <StatusBar>
        <StatusCell $w={74}>工作平面</StatusCell>
        <StatusCell $w={107}>x -234.430</StatusCell>
        <StatusCell $w={107}>y -69.567</StatusCell>
        <StatusCell $w={107}>z 0.000</StatusCell>
        <StatusCell $w={107}>毫米</StatusCell>
        <StatusCell $w={206} $start>
          <Swatch />
          默认值
        </StatusCell>
        {modes.map(([name, width, on]) => (
          <StatusCell key={name} $w={width} $on={on}>
            {name}
          </StatusCell>
        ))}
        <Memory>可用的物理内存: 5834 MB</Memory>
      </StatusBar>
      <Taskbar />
    </Window>
  );
};

export default App;
